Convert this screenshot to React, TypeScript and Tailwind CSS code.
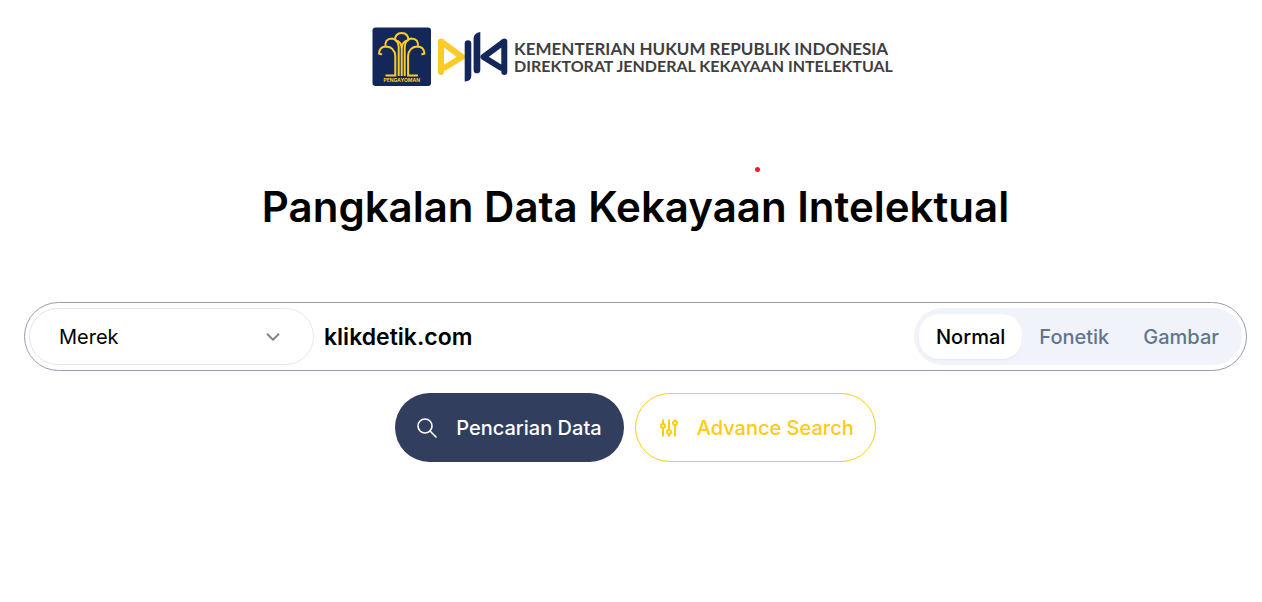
import React, { useState } from "react";
import { ChevronDown } from "lucide-react";

type Mode = "Normal" | "Fonetik" | "Gambar";

const MODES: Mode[] = ["Normal", "Fonetik", "Gambar"];
const CATEGORIES = ["Merek", "Paten", "Desain Industri", "Hak Cipta"];

function BrandMark() {
  return (
    <svg width="137" height="60" viewBox="0 0 137 60" fill="none" role="img" aria-label="DJKI">
      {/* Pengayoman emblem */}
      <rect x="0.5" y="0.5" width="58.5" height="58.5" rx="3" fill="#13275a" />
      <g stroke="#fdcb27" strokeWidth="2">
        <path d="M23 13.500Q23 6 29.700 6T36.400 13.500" />
        <path d="M13.500 20Q12.500 11.500 20 11.500Q26 12 26.700 20V49" />
        <path d="M45.900 20Q46.900 11.500 39.400 11.500Q33.400 12 32.700 20V49" />
        <path d="M10 27.500L7 26.500Q7.500 19.500 14 19.500Q22.500 20 23.300 29V48.500H13.500" />
        <path d="M49.400 27.500L52.400 26.500Q51.900 19.500 45.400 19.500Q36.900 20 36.100 29V48.500H45.900" />
        <path d="M23 13.500Q29.700 14 29.700 22T29.700 49M36.400 13.500Q29.700 14 29.700 22" />
      </g>
      <text
        x="29.700"
        y="55"
        textAnchor="middle"
        fill="#fdcb27"
        fontSize="5"
        fontWeight="700"
        fontFamily="Inter, sans-serif"
      >
        PENGAYOMAN
      </text>
      {/* DJKI monogram */}
      <g strokeWidth="6" strokeLinecap="round" strokeLinejoin="round">
        <path d="M69 45V14.500L90 30L73 40.500" stroke="#fdcb27" />
        <path d="M132.300 45V14.500L111.500 30L128.500 40.500" stroke="#13275a" />
      </g>
      <path d="M92.700 16.500a3.300 3.300 0 0 1 6.600 0V49q0 5-6.600 5.500Z" fill="#13275a" />
      <path d="M108.300 5q-6.700 1-6.700 6.500V43a3.300 3.300 0 0 0 6.700 0Z" fill="#13275a" />
    </svg>
  );
}

function SearchIcon() {
  return (
    <svg width="20" height="20" viewBox="0 0 20 20" fill="none" stroke="currentColor" strokeWidth="1.600" aria-hidden="true">
      <circle cx="8" cy="8" r="7" />
      <path d="M13 13l6 6" strokeLinecap="round" />
    </svg>
  );
}

function SlidersIcon() {
  return (
    <svg width="18" height="18" viewBox="0 0 18 18" fill="none" stroke="currentColor" strokeWidth="2" aria-hidden="true">
      <path d="M3 0.500V5M3 9v8.500M9 0.500V11M9 15v2.500M15 0.500V2M15 6v11.500" />
      <circle cx="3" cy="7" r="2" />
      <circle cx="9" cy="13" r="2" />
      <circle cx="15" cy="4" r="2" />
    </svg>
  );
}

export default function App() {
  const [category, setCategory] = useState("Merek");
  const [query, setQuery] = useState("klikdetik.com");
  const [mode, setMode] = useState<Mode>("Normal");

  return (
    <main className="bg-white pt-[27px] pr-[15px] pb-8 pl-6 font-['Inter','Liberation_Sans',sans-serif] text-black">
      <header className="flex items-center justify-center gap-[5px]">
        <BrandMark />
        <div className="pr-1.5 font-['Lato',sans-serif] font-bold whitespace-nowrap text-[#3f3f42]">
          <p className="text-[17px] leading-[17px]">KEMENTERIAN HUKUM REPUBLIK INDONESIA</p>
          <p className="text-[16px] leading-[17px]">DIREKTORAT JENDERAL KEKAYAAN INTELEKTUAL</p>
        </div>
      </header>

      <div className="relative mx-auto mt-[90px] w-fit">
        <h1 className="text-[42px] leading-[60px] font-semibold whitespace-nowrap">
          Pangkalan Data Kekayaan Intelektual
        </h1>
        <span className="absolute -top-2.5 left-[66%] size-[5px] rounded-full bg-[#ed1c24]" />
      </div>

      <form onSubmit={(e) => e.preventDefault()}>
        <div className="mt-[65px] flex items-center rounded-full border border-[#979dad] px-1 py-[5px]">
          <div className="relative w-[285px] shrink-0">
            <select
              aria-label="Kategori"
              value={category}
              onChange={(e) => setCategory(e.target.value)}
              className="h-[57px] w-full appearance-none rounded-full border border-slate-200 bg-white pr-14 pl-[29px] text-[20px] outline-none"
            >
              {CATEGORIES.map((c) => (
                <option key={c}>{c}</option>
              ))}
            </select>
            <ChevronDown
              size={22}
              strokeWidth={2}
              className="pointer-events-none absolute top-1/2 right-[30px] -translate-y-1/2 text-[#808085]"
            />
          </div>
          <input
            type="text"
            aria-label="Kata kunci"
            value={query}
            onChange={(e) => setQuery(e.target.value)}
            className="h-[57px] min-w-0 flex-1 bg-transparent px-2.5 text-[23px] font-semibold outline-none"
          />
          <div role="tablist" className="flex h-[57px] shrink-0 items-center rounded-full bg-[#f0f3f9] p-[5px] pr-1.5">
            {MODES.map((m) => (
              <button
                key={m}
                type="button"
                role="tab"
                aria-selected={mode === m}
                onClick={() => setMode(m)}
                className={`h-[45px] rounded-[20px] px-[17px] text-[20px] font-medium ${
                  mode === m ? "bg-white text-black shadow-xs" : "text-slate-500"
                }`}
              >
                {m}
              </button>
            ))}
          </div>
        </div>

        <div className="mt-[22px] flex justify-center gap-[11px]">
          <button
            type="submit"
            className="flex h-[69px] items-center gap-[19px] rounded-full bg-[#323e5e] px-[22px] text-[20px] font-medium text-white"
          >
            <SearchIcon />
            Pencarian Data
          </button>
          <button
            type="button"
            className="flex h-[69px] items-center gap-[19px] rounded-full border border-[#fdcb12] pr-[21px] pl-6 text-[20px] font-medium text-[#fdcb12]"
          >
            <SlidersIcon />
            Advance Search
          </button>
        </div>
      </form>
    </main>
  );
}
